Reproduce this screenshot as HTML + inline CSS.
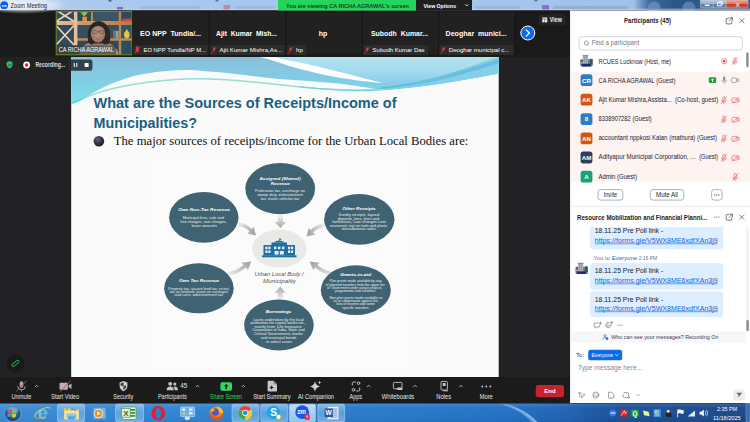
<!DOCTYPE html>
<html lang="en">
<head>
<meta charset="utf-8">
<title>Zoom Meeting</title>
<style>
html,body{margin:0;padding:0;width:750px;height:422px;overflow:hidden;background:#1a1a1a;}
svg{display:block;position:absolute;left:0;top:0;}
text{font-family:"Liberation Sans",sans-serif;}
.serif{font-family:"Liberation Serif",serif;}
</style>
</head>
<body>
<svg width="750" height="422" viewBox="0 0 750 422">
<defs>
<linearGradient id="tb" x1="0" y1="0" x2="1" y2="0"><stop offset="0" stop-color="#b4cfee"/><stop offset="0.150" stop-color="#a8c8ee"/><stop offset="0.700" stop-color="#a4c4ec"/><stop offset="0.845" stop-color="#a2c0e8"/><stop offset="0.865" stop-color="#3f6a9e"/><stop offset="0.900" stop-color="#2a5688"/><stop offset="0.930" stop-color="#2c588a"/><stop offset="1" stop-color="#3a5f8e"/></linearGradient>
<linearGradient id="task" x1="0" y1="0" x2="1" y2="0"><stop offset="0" stop-color="#3c8cd6"/><stop offset="0.300" stop-color="#3082d2"/><stop offset="0.550" stop-color="#2878ca"/><stop offset="0.680" stop-color="#2270c4"/><stop offset="0.750" stop-color="#1f64b4"/><stop offset="0.820" stop-color="#1c529a"/><stop offset="1" stop-color="#1b4888"/></linearGradient>
<linearGradient id="hdr" x1="0" y1="0" x2="1" y2="0">
<stop offset="0" stop-color="#7cc3dc"/><stop offset="0.5" stop-color="#86cbe0"/><stop offset="1" stop-color="#b5e2ea"/>
</linearGradient>
</defs>

<!-- ===== main dark area ===== -->
<g id="main-bg">
<rect x="0" y="0" width="750" height="422" fill="#1a1a1a"/>
<rect x="0" y="56.600" width="570" height="321" fill="#222224"/>
</g>

<g id="titlebar">
<rect x="0" y="0" width="750" height="10" fill="url(#tb)"/>
<rect x="0" y="8.600" width="750" height="1.800" fill="#c4d6ec" opacity="0.550"/>
<!-- blurred background shapes in aero glass -->
<defs><radialGradient id="glow" cx="0.500" cy="0.500" r="0.500"><stop offset="0" stop-color="#fff" stop-opacity="0.850"/><stop offset="0.600" stop-color="#fff" stop-opacity="0.500"/><stop offset="1" stop-color="#fff" stop-opacity="0"/></radialGradient>
<filter id="tbblur" x="-5%" y="-50%" width="110%" height="200%"><feGaussianBlur stdDeviation="0.700"/></filter></defs>
<ellipse cx="24" cy="5" rx="44" ry="9" fill="url(#glow)"/>
<g filter="url(#tbblur)">
<rect x="140" y="6.200" width="60" height="2.600" fill="#8fabd2" opacity="0.550"/>
<rect x="235" y="6.200" width="40" height="2.600" fill="#8fabd2" opacity="0.500"/>
<rect x="223.500" y="5" width="6.500" height="4.400" fill="#c87890" opacity="0.800"/>
<circle cx="110" cy="0.500" r="1.600" fill="#3a5a90" opacity="0.800"/><circle cx="217" cy="0" r="1.600" fill="#3a5a90" opacity="0.800"/><circle cx="536" cy="0" r="1.600" fill="#3a5a90" opacity="0.800"/>
<rect x="117" y="7" width="6" height="2.400" fill="#7a4cc8" opacity="0.800"/>
<rect x="475" y="6.200" width="45" height="2.600" fill="#8aa6d0" opacity="0.600"/>
<rect x="542" y="5" width="7" height="4.400" fill="#7468c8" opacity="0.850"/>
<rect x="553" y="6" width="75" height="3" fill="#88a4ce" opacity="0.650"/>
<circle cx="654" cy="8" r="6.500" fill="#7f9cc8" opacity="0.600"/>
<circle cx="689" cy="8" r="6.500" fill="#7f9cc8" opacity="0.550"/>
</g>
<!-- zoom logo -->
<circle cx="4.2" cy="5.2" r="3.9" fill="#0b5cff"/>
<text x="4.2" y="6.6" font-size="3.6" font-weight="700" fill="#fff" text-anchor="middle">zm</text>
<text x="10.5" y="8" font-size="7.2" fill="#1a1a1a" textLength="36.5" lengthAdjust="spacingAndGlyphs">Zoom Meeting</text>
<!-- window controls -->
<defs><linearGradient id="wc" x1="0" y1="0" x2="0" y2="1"><stop offset="0" stop-color="#b4c6de"/><stop offset="0.450" stop-color="#9ab0d0"/><stop offset="0.500" stop-color="#5a78a4"/><stop offset="1" stop-color="#6a88b2"/></linearGradient>
<linearGradient id="wx" x1="0" y1="0" x2="0" y2="1"><stop offset="0" stop-color="#eaa898"/><stop offset="0.450" stop-color="#dc7a66"/><stop offset="0.500" stop-color="#c63a24"/><stop offset="1" stop-color="#d0553c"/></linearGradient></defs>
<path d="M700.400 0 H726.200 V8 H702 Q700.400 8 700.400 6.400 Z" fill="url(#wc)" stroke="#c8d4e6" stroke-width="0.500"/>
<line x1="713.200" y1="0" x2="713.200" y2="8" stroke="#c8d4e6" stroke-width="0.500"/>
<path d="M726.200 0 H748 V6.400 Q748 8 746.400 8 H726.200 Z" fill="url(#wx)" stroke="#d8c0c0" stroke-width="0.500"/>
<rect x="704.600" y="4.300" width="5.200" height="1.800" fill="#fff" stroke="#4a5f80" stroke-width="0.300"/>
<rect x="717.600" y="2.800" width="3.600" height="3" fill="none" stroke="#fff" stroke-width="0.900"/><path d="M719 2.600 v-0.900 h3.600 v3 h-1" fill="none" stroke="#fff" stroke-width="0.700"/>
<text x="737.800" y="6.700" font-size="8" font-weight="700" fill="#fff" text-anchor="middle" stroke="#7a2a20" stroke-width="0.200">x</text>
<!-- sharing banner -->
<rect x="278" y="0" width="138" height="10.500" fill="#25d45a"/>
<text x="286" y="7.600" font-size="6" font-weight="700" fill="#0c4a1c" textLength="123" lengthAdjust="spacingAndGlyphs">You are viewing CA RICHA AGRAWAL's screen</text>
<rect x="416" y="0" width="56" height="10.5" fill="#1f1f1f"/>
<text x="423.500" y="7.600" font-size="6" font-weight="700" fill="#fff" textLength="32.500" lengthAdjust="spacingAndGlyphs">View Options</text>
<path d="M465.200 4.300 l1.6 1.7 l1.6 -1.7" fill="none" stroke="#fff" stroke-width="0.8"/>
</g>

<g id="gallery">
<!-- active speaker video thumbnail -->
<g id="video-thumb">
<defs><linearGradient id="wood" x1="0" y1="0" x2="1" y2="0"><stop offset="0" stop-color="#e6c19a"/><stop offset="0.35" stop-color="#d09a68"/><stop offset="1" stop-color="#b9783f"/></linearGradient>
<radialGradient id="face" cx="0.5" cy="0.45" r="0.6"><stop offset="0" stop-color="#bc9684"/><stop offset="1" stop-color="#94705f"/></radialGradient></defs>
<filter id="vblur" x="-2%" y="-2%" width="104%" height="104%"><feGaussianBlur stdDeviation="0.350"/></filter>
<clipPath id="vclip"><rect x="56.2" y="11.400" width="75.800" height="43.400"/></clipPath>
<g clip-path="url(#vclip)"><g filter="url(#vblur)">
<rect x="56" y="11" width="77" height="45" fill="#30495a"/>
<rect x="77" y="25" width="42" height="14" fill="#34505f"/>
<rect x="93" y="11" width="26" height="10" fill="#3a5663"/>
<rect x="121" y="25" width="11" height="14" fill="#2e5468"/>
<rect x="121" y="40.500" width="11" height="14" fill="#2b4e60"/>
<rect x="56" y="21" width="76.500" height="4" fill="url(#wood)"/>
<rect x="77" y="38.300" width="55.500" height="2.400" fill="#c68a52"/>
<rect x="73.900" y="11" width="3.500" height="34.500" fill="#e2c09e"/>
<rect x="91" y="11" width="1.800" height="10.500" fill="#c4905e"/>
<rect x="118.800" y="11" width="2.400" height="44" fill="#c08448"/>
<path d="M56 10 L74 21.500 M74 10 L56 21.500 M56 25.500 L74 45 M74 25.500 L56 45" stroke="#ecd2b6" stroke-width="1.700" fill="none"/>
<rect x="82.400" y="16.700" width="4.600" height="4.400" fill="#e0913e"/>
<path d="M79.600 11.400 l4.400 5.400 l5.300 -5.400 l-3.200 1.600 l-1.700 -1.800 l-1.700 1.800 z" fill="#7db53a"/>
<path d="M82 11.400 l2.500 4.500 l2.500 -4.500 z" fill="#8fc84a"/>
<rect x="122.300" y="18.700" width="9" height="2.400" fill="#c2485a"/>
<ellipse cx="126.800" cy="34.800" rx="2.800" ry="3.700" fill="#e8c63a"/><rect x="126" y="29.600" width="1.600" height="2.400" fill="#e8c63a"/>
<rect x="113.200" y="30.600" width="2.600" height="7.700" fill="#6f7a7c"/><rect x="116" y="30.900" width="2.600" height="7.400" fill="#98a0a0"/>
<path d="M79 55 q1 -11 12 -12.200 l14 0 q12 1.200 14 12.200 z" fill="#9a9692"/>
<path d="M88 40 C86.400 30 90.400 21.600 98.400 21 C106.800 21.600 111.200 30 110.200 38 C110 43 108.400 44.400 107 44.400 L90.600 44.400 C88.600 43.400 88.200 42 88 40 Z" fill="#2b2522"/>
<ellipse cx="98" cy="33.600" rx="7.200" ry="9.200" fill="url(#face)"/>
<path d="M90.600 31 q1 -8.400 7.500 -8.800 q6.500 0.400 7.500 8.800 q-3 -5 -7.500 -5 q-4.500 0 -7.500 5z" fill="#2b2522"/>
<g fill="none" stroke="#4e3c38" stroke-width="0.550"><rect x="92.400" y="30.600" width="5" height="2.800" rx="1.100"/><rect x="99.300" y="30.600" width="5" height="2.800" rx="1.100"/><path d="M97.400 31.600 h1.900"/></g>
<path d="M96.200 39 q2.200 0.800 4.400 0" stroke="#7a4f48" stroke-width="0.500" fill="none"/>
<path d="M92.500 43.500 l5.800 4.500 l5.800 -4.500 z" fill="#a17c6a"/>
</g><rect x="56" y="45.300" width="60" height="9.700" fill="#3c3a38" opacity="0.620"/>
</g>
<rect x="56.200" y="11.400" width="75.800" height="43.400" fill="none" stroke="#6c8c1c" stroke-width="1"/>
<text x="58.800" y="52.200" font-size="6.300" fill="#fff" textLength="55" lengthAdjust="spacingAndGlyphs">CA RICHA AGRAWAL</text>
</g>

<!-- participant tiles -->
<g id="tiles" font-weight="700" fill="#fff" font-size="7">
<rect x="133" y="11.600" width="76" height="42.600" fill="#212121"/>
<rect x="209.6" y="11.600" width="76" height="42.600" fill="#212121"/>
<rect x="286.2" y="11.600" width="76" height="42.600" fill="#212121"/>
<rect x="362.8" y="11.600" width="75.6" height="42.600" fill="#212121"/>
<rect x="439" y="11.600" width="75.6" height="42.600" fill="#212121"/>
<g stroke="#151515" stroke-width="0.800"><line x1="132.7" y1="11" x2="132.7" y2="56"/><line x1="209.2" y1="11" x2="209.2" y2="56"/><line x1="285.8" y1="11" x2="285.8" y2="56"/><line x1="362.4" y1="11" x2="362.4" y2="56"/><line x1="438.6" y1="11" x2="438.6" y2="56"/><line x1="514.8" y1="11" x2="514.8" y2="56"/></g>
<text x="140" y="35.6" textLength="61" lengthAdjust="spacingAndGlyphs" xml:space="preserve">EO NPP  Tundla/...</text>
<text x="216" y="35.6" textLength="61" lengthAdjust="spacingAndGlyphs" xml:space="preserve">Ajit  Kumar  Mish...</text>
<text x="323" y="35.6" text-anchor="middle">hp</text>
<text x="371" y="35.6" textLength="57" lengthAdjust="spacingAndGlyphs" xml:space="preserve">Subodh  Kumar...</text>
<text x="445.6" y="35.6" textLength="61" lengthAdjust="spacingAndGlyphs" xml:space="preserve">Deoghar  munici...</text>
</g>
<g id="tile-labels" font-size="6.1" fill="#fff">
<rect x="133.4" y="45" width="75" height="10" fill="#2c2c2c"/>
<rect x="210" y="45" width="75" height="10" fill="#2c2c2c"/>
<rect x="286.6" y="45" width="20" height="10" fill="#2c2c2c"/>
<rect x="363" y="45" width="65" height="10" fill="#2c2c2c"/>
<rect x="439.4" y="45" width="74" height="10" fill="#2c2c2c"/>
<g id="micoff" fill="#e0383e">
<path id="mo" d="M0 0 m-0.9 -3 a0.9 0.9 0 0 1 1.8 0 v2.2 a0.9 0.9 0 0 1 -1.8 0 z M-1.9 -0.6 a1.9 1.9 0 0 0 3.8 0 M0 1.3 v1.2" stroke="#e0383e" stroke-width="0.6" transform="translate(137.3,50.3)"/>
</g>
<g stroke="#e0383e" stroke-width="0.8">
<line x1="135" y1="53.3" x2="139.8" y2="47"/><line x1="211.6" y1="53.3" x2="216.4" y2="47"/><line x1="288.2" y1="53.3" x2="293" y2="47"/><line x1="364.8" y1="53.3" x2="369.6" y2="47"/><line x1="441" y1="53.3" x2="445.8" y2="47"/>
</g>
<g fill="#e0383e">
<rect x="136.4" y="47.2" width="1.9" height="3.8" rx="0.95"/><rect x="213" y="47.2" width="1.9" height="3.8" rx="0.95"/><rect x="289.6" y="47.2" width="1.9" height="3.8" rx="0.95"/><rect x="366.2" y="47.2" width="1.9" height="3.8" rx="0.95"/><rect x="442.4" y="47.2" width="1.9" height="3.8" rx="0.95"/>
</g>
<text x="143.5" y="52.4" textLength="62.5" lengthAdjust="spacingAndGlyphs">EO NPP Tundla/NP M...</text>
<text x="219.6" y="52.4" textLength="62.5" lengthAdjust="spacingAndGlyphs">Ajit Kumar Mishra,As...</text>
<text x="296" y="52.4">hp</text>
<text x="372.6" y="52.4" textLength="52" lengthAdjust="spacingAndGlyphs">Subodh Kumar Das</text>
<text x="448.8" y="52.4" textLength="60.5" lengthAdjust="spacingAndGlyphs">Deoghar municipal c...</text>
</g>
<!-- next arrow -->
<circle cx="527.8" cy="33" r="7" fill="#0e6be8" stroke="#fff" stroke-width="1"/>
<path d="M526.2 29.8 l3.2 3.2 l-3.2 3.2" fill="none" stroke="#fff" stroke-width="1.2" stroke-linecap="round" stroke-linejoin="round"/>
<!-- view button -->
<rect x="538.400" y="14.600" width="27.300" height="10.600" rx="2" fill="#242424"/>
<g fill="#f0f0f0"><rect x="542.300" y="17.500" width="5" height="1.300"/><rect x="542.300" y="19.300" width="2.300" height="3"/><rect x="545" y="19.300" width="2.300" height="3"/></g>
<text x="549.800" y="22.300" font-size="6.300" font-weight="700" fill="#f0f0f0" textLength="12" lengthAdjust="spacingAndGlyphs">View</text>

</g>

<g id="slide">
<defs>
<clipPath id="sclip"><rect x="71.200" y="57" width="427.500" height="320"/></clipPath>
<linearGradient id="hA" gradientUnits="userSpaceOnUse" x1="0" y1="57" x2="0" y2="100"><stop offset="0" stop-color="#8bbfdc"/><stop offset="0.500" stop-color="#82cce4"/><stop offset="1" stop-color="#7edbe9"/></linearGradient>
<linearGradient id="hB" gradientUnits="userSpaceOnUse" x1="0" y1="57" x2="0" y2="90"><stop offset="0" stop-color="#b4e3ee"/><stop offset="0.450" stop-color="#a2daee"/><stop offset="1" stop-color="#7fc2ee"/></linearGradient>
<linearGradient id="arrD" x1="0" y1="0" x2="0" y2="1"><stop offset="0" stop-color="#f2f2f2"/><stop offset="1" stop-color="#a6a6a6"/></linearGradient>
<linearGradient id="arrU" x1="0" y1="1" x2="0" y2="0"><stop offset="0" stop-color="#f2f2f2"/><stop offset="1" stop-color="#a6a6a6"/></linearGradient>
<linearGradient id="arrR" x1="0" y1="0" x2="1" y2="0.300"><stop offset="0" stop-color="#f2f2f2"/><stop offset="1" stop-color="#a6a6a6"/></linearGradient>
<linearGradient id="arrL" x1="1" y1="0" x2="0" y2="0.300"><stop offset="0" stop-color="#f2f2f2"/><stop offset="1" stop-color="#a6a6a6"/></linearGradient>
<linearGradient id="arrRU" x1="0" y1="1" x2="1" y2="0.300"><stop offset="0" stop-color="#f2f2f2"/><stop offset="1" stop-color="#a6a6a6"/></linearGradient>
<linearGradient id="arrLU" x1="1" y1="1" x2="0" y2="0.300"><stop offset="0" stop-color="#f2f2f2"/><stop offset="1" stop-color="#a6a6a6"/></linearGradient>
<radialGradient id="bul" cx="0.4" cy="0.35" r="0.7"><stop offset="0" stop-color="#6a6478"/><stop offset="0.5" stop-color="#3a3546"/><stop offset="1" stop-color="#1d1a26"/></radialGradient>
</defs>
<rect x="71.200" y="57" width="427.500" height="320" fill="#fafafa"/>
<g clip-path="url(#sclip)">
<!-- header waves -->
<path d="M71 57 H499 V73.400 C492 74.600 488 75.400 486 75.800 C475 78 465 79.600 454 81.400 C443 83.200 433 85 422 86.200 C410 87.600 398 89 390 89.400 C378 89.400 366 87.400 354 85.400 C343 83.800 333 83 322 82.200 C311 81.200 300 80.400 290 79.800 C280 79.200 260 77 244 75 C232 73.500 222 72.500 212 71.800 C204 71.200 197 70.200 190 70 C182 69.800 174 70.200 166 71 C155 72 145 73.500 134 76 C123 78.800 112 83.500 102 88 C94 92 86 97 80 101 C77 102.500 74 103.500 71 104 Z" fill="url(#hA)"/>
<path d="M274 57 H499 V73.400 C488 75.400 475 78 454 81.400 C433 85 410 87.600 390 89 L383 83 C370 80 355 75.500 340 72 C322 67.500 305 63.500 290 60.600 C284 59.300 279 58 274 57 Z" fill="url(#hB)"/>
<path d="M499 73.400 C488 75.400 475 78 454 81.400 C433 85 410 87.600 390 89.400 L376 88.400 C400 86.500 430 82 454 75.500 C472 70.500 488 66 499 62 Z" fill="#84cfe8"/>
<path d="M380 87.200 C410 85 432 80 454 73 C472 67.500 488 62.500 499 58.500 V63 C488 67 472 71.500 454 76.500 C430 83 405 86.800 384 88.600 Z" fill="#6fb8ea"/>
<path d="M260 57 C270 59.500 280 63 290 66.200 C306 71 322 74.500 338 77.400 C354 80 370 82 383 83 C370 80 355 75.500 340 72 C322 67.500 305 63.500 290 60.600 C284 59.300 279 58 274 57 Z" fill="#fdfefe"/>
<g fill="none" stroke="#38c0aa" stroke-width="0.500">
<path d="M71 104 C82 99 92 95 102 91.800 C113 88.500 123 86.500 134 84.600 C145 82.800 155 81.500 166 80.600 C175 79.800 185 79 197 79 C213 79 228 80 244 81.400 C255 82.500 265 83.500 276 84.600 C292 86.300 310 88.500 338 89.400 C355 90.300 372 90 390 87 C412 83.500 435 78.500 454 72.600 C466 69 476 65 486 61.400 L499 57.300"/>
<path d="M71 103 C82 98.200 92 94.200 102 91 C113 87.800 123 85.800 134 83.900 C145 82 155 80.800 166 80 C175 79.200 185 78.400 197 78.400 C213 78.400 228 79.400 244 80.800 C255 81.800 265 82.800 276 84 C292 85.700 310 88 338 90.200 C355 91 372 90.600 390 88 C412 84.600 435 80 454 74 C466 70.200 476 66.400 486 62.600 L499 58.500" stroke="#5fd0c4"/>
<path d="M300 86.800 C320 88.800 345 90.800 370 90.600 C380 90.400 392 89.200 404 87" stroke="#6fd6e4" stroke-width="1.200"/>
</g>
</g>
<!-- title -->
<text x="93.500" y="108.200" font-size="13.900" font-weight="700" fill="#1a6081" textLength="303" lengthAdjust="spacingAndGlyphs">What are the Sources of Receipts/Income of</text>
<text x="93.500" y="127.900" font-size="13.900" font-weight="700" fill="#1a6081" textLength="103.500" lengthAdjust="spacingAndGlyphs">Municipalities?</text>
<circle cx="98.900" cy="141.200" r="5.300" fill="url(#bul)"/>
<text class="serif" x="113.800" y="145" font-size="12.200" fill="#111" textLength="354.500" lengthAdjust="spacingAndGlyphs">The major sources of receipts/income for the Urban Local Bodies are:</text>

<!-- diagram -->
<g id="diagram">
<rect x="152" y="156" width="256" height="216" fill="#fbfbfb"/>
<!-- arrows -->
<g>
<path fill="url(#arrD)" d="M277.700 215.300 h5.400 v6.600 h3 l-5.700 6 l-5.700 -6 h3 z"/>
<path fill="url(#arrU)" d="M277.600 299.500 h5.200 v-6.800 h3 l-5.600 -6 l-5.600 6 h3 z"/>
<path fill="url(#arrR)" d="M238 222 q9 1.500 13.500 7 l2.200 -2 l2.300 8.400 l-8.800 -2 l2.200 -2 q-4 -4.500 -11.500 -5 z"/>
<path fill="url(#arrL)" d="M324.500 223 q-9 1.500 -13.500 7 l-2.200 -2 l-2.300 8.400 l8.800 -2 l-2.200 -2 q4 -4.500 11.500 -5 z"/>
<path fill="url(#arrRU)" d="M227 272.500 q10 -2 16.500 -7.500 l-2 -2.300 l9.800 -1.200 l-3.400 8.400 l-2 -2.300 q-7.500 6.500 -18 8.400 z"/>
<path fill="url(#arrLU)" d="M334 272.500 q-10 -2 -16.500 -7.500 l2 -2.300 l-9.800 -1.200 l3.400 8.400 l2 -2.300 q7.500 6.500 18 8.400 z"/>
</g>
<!-- ellipses -->
<g fill="#3f6373">
<ellipse cx="280.200" cy="188.600" rx="34.900" ry="25.700"/>
<ellipse cx="203.800" cy="217.400" rx="34.700" ry="25.300"/>
<ellipse cx="359.300" cy="219.400" rx="35.200" ry="25.300"/>
<ellipse cx="198.900" cy="288.300" rx="34.800" ry="25"/>
<ellipse cx="355.800" cy="290.200" rx="35" ry="24.900"/>
<ellipse cx="278.900" cy="325" rx="34.800" ry="25.400"/>
</g>
<ellipse cx="279.300" cy="248.600" rx="27.300" ry="19" fill="#e9e9e5"/>
<!-- building icon -->
<g fill="#1f6fa3">
<rect x="263.500" y="245" width="31.500" height="10.500"/>
<rect x="262" y="255.300" width="34.500" height="2"/>
<rect x="271.500" y="242.500" width="15.500" height="3"/>
<path d="M273.500 242.500 q5.800 -4 11.600 0 z"/>
<rect x="279" y="238.600" width="0.600" height="2.500"/><rect x="279.300" y="238.600" width="2" height="1.200"/>
</g>
<g fill="#e9f1f6">
<rect x="265.300" y="246.600" width="2.200" height="2.600"/><rect x="268.300" y="246.600" width="2.200" height="2.600"/>
<rect x="265.300" y="250.400" width="2.200" height="2.600"/><rect x="268.300" y="250.400" width="2.200" height="2.600"/>
<rect x="288" y="246.600" width="2.200" height="2.600"/><rect x="291" y="246.600" width="2.200" height="2.600"/>
<rect x="288" y="250.400" width="2.200" height="2.600"/><rect x="291" y="250.400" width="2.200" height="2.600"/>
<rect x="274" y="246.600" width="2.400" height="2.600"/><rect x="278" y="246.600" width="2.400" height="2.600"/><rect x="282" y="246.600" width="2.400" height="2.600"/>
<rect x="274.500" y="251" width="4" height="3.600"/><rect x="279.800" y="251" width="4" height="3.600"/>
</g>
<g font-style="italic" fill="#555" font-size="5.400" text-anchor="middle">
<text x="279" y="276.300" textLength="49" lengthAdjust="spacingAndGlyphs">Urban Local Body /</text>
<text x="279.500" y="282.800" textLength="33" lengthAdjust="spacingAndGlyphs">Municipality</text>
</g>
<!-- circle titles -->
<g font-style="italic" font-weight="700" fill="#fff" font-size="4.300" text-anchor="middle">
<text x="280" y="179.600" textLength="41" lengthAdjust="spacingAndGlyphs">Assigned (Shared)</text>
<text x="280.300" y="184.600" textLength="19" lengthAdjust="spacingAndGlyphs">Revenue</text>
<text x="204.100" y="211.300" textLength="51.800" lengthAdjust="spacingAndGlyphs">Own Non-Tax Revenue</text>
<text x="359" y="209.900" textLength="33.500" lengthAdjust="spacingAndGlyphs">Other Receipts</text>
<text x="199.100" y="282" textLength="40.300" lengthAdjust="spacingAndGlyphs">Own Tax Revenue</text>
<text x="355.600" y="276.200" textLength="30.800" lengthAdjust="spacingAndGlyphs">Grants-in-aid</text>
<text x="278.500" y="312.900" textLength="25.700" lengthAdjust="spacingAndGlyphs">Borrowings</text>
</g>
<!-- circle body text -->
<g fill="#e8eef0" font-size="3.300" text-anchor="middle">
<text x="280" y="192" textLength="50" lengthAdjust="spacingAndGlyphs">Profession tax, surcharge on</text>
<text x="280" y="195.700" textLength="45.500" lengthAdjust="spacingAndGlyphs">stamp duty, entertainment</text>
<text x="280" y="199.500" textLength="38.400" lengthAdjust="spacingAndGlyphs">tax, motor vehicles tax</text>
<text x="203.300" y="219.100" textLength="41" lengthAdjust="spacingAndGlyphs">Municipal fees, sale and</text>
<text x="203.400" y="222.800" textLength="46.400" lengthAdjust="spacingAndGlyphs">hire charges, user charges,</text>
<text x="204.200" y="226.500" textLength="25.400" lengthAdjust="spacingAndGlyphs">lease amounts</text>
<text x="358.800" y="215.900" textLength="40.500" lengthAdjust="spacingAndGlyphs">Sundry receipts, lapsed</text>
<text x="358.400" y="219.500" textLength="41.400" lengthAdjust="spacingAndGlyphs">deposits, fees, fines and</text>
<text x="359" y="223.100" textLength="53.500" lengthAdjust="spacingAndGlyphs">forfeitures, Law charges cost</text>
<text x="358.800" y="226.500" textLength="58.200" lengthAdjust="spacingAndGlyphs">recovered, rent on tools and plants,</text>
<text x="358.800" y="230.100" textLength="34.200" lengthAdjust="spacingAndGlyphs">miscellaneous sales</text>
<text x="198.900" y="289.800" textLength="61.300" lengthAdjust="spacingAndGlyphs">Property tax, vacant land tax, octroi,</text>
<text x="198.800" y="293.100" textLength="58.300" lengthAdjust="spacingAndGlyphs">tax on animals, taxes on carriages</text>
<text x="198.800" y="296.400" textLength="48.400" lengthAdjust="spacingAndGlyphs">and carts, advertisement tax</text>
<text x="355.600" y="282.100" textLength="52.400" lengthAdjust="spacingAndGlyphs">Plan grants made available by way</text>
<text x="355.300" y="285.600" textLength="59.200" lengthAdjust="spacingAndGlyphs">of planned transfers from the upper tier</text>
<text x="354.700" y="288.800" textLength="55.500" lengthAdjust="spacingAndGlyphs" xml:space="preserve">of  Government under various projects,</text>
<text x="355.600" y="292" textLength="41.300" lengthAdjust="spacingAndGlyphs">programmes and schemes.</text>
<text x="355.900" y="298.900" textLength="53" lengthAdjust="spacingAndGlyphs">Non-plan grants made available so</text>
<text x="355.600" y="302.100" textLength="44.400" lengthAdjust="spacingAndGlyphs">as to compensate against the</text>
<text x="355.600" y="305.300" textLength="38.200" lengthAdjust="spacingAndGlyphs">loss of income and some</text>
<text x="355.900" y="308.600" textLength="27.100" lengthAdjust="spacingAndGlyphs">specific transfers.</text>
<text x="278.400" y="320.800" textLength="50.500" lengthAdjust="spacingAndGlyphs">Loans undertaken by the local</text>
<text x="278.200" y="324.300" textLength="56" lengthAdjust="spacingAndGlyphs">authorities for capital works etc.,</text>
<text x="278.200" y="327.800" textLength="47.200" lengthAdjust="spacingAndGlyphs" xml:space="preserve">mainly from  Life Insurance</text>
<text x="278.500" y="331.400" textLength="52.400" lengthAdjust="spacingAndGlyphs">Corporation of India, State and</text>
<text x="278.400" y="335.200" textLength="48.700" lengthAdjust="spacingAndGlyphs">Central Governments, banks</text>
<text x="278.500" y="338.900" textLength="35.500" lengthAdjust="spacingAndGlyphs">and municipal bonds</text>
<text x="279" y="342.500" textLength="26" lengthAdjust="spacingAndGlyphs">in select cases</text>
</g>
</g>
</g>

<g id="toolbar">
<rect x="0" y="377" width="570" height="26.200" fill="#1b1b1b"/>
<!-- annotate pencil -->
<circle cx="15.500" cy="363.300" r="9" fill="#19191c"/>
<rect x="11.300" y="362" width="8.400" height="2.700" rx="1.350" fill="none" stroke="#2fbf5a" stroke-width="0.900" transform="rotate(-38 15.500 363.300)"/>
<g font-size="6.300" fill="#e6e6e6" text-anchor="middle">
<text x="21.500" y="399" textLength="20" lengthAdjust="spacingAndGlyphs">Unmute</text>
<text x="65.200" y="399" textLength="28" lengthAdjust="spacingAndGlyphs">Start Video</text>
<text x="123.300" y="399" textLength="20" lengthAdjust="spacingAndGlyphs">Security</text>
<text x="172.300" y="399" textLength="28.800" lengthAdjust="spacingAndGlyphs">Participants</text>
<text x="226" y="399" textLength="32" lengthAdjust="spacingAndGlyphs" fill="#2fd85f">Share Screen</text>
<text x="271.800" y="399" textLength="37.300" lengthAdjust="spacingAndGlyphs">Start Summary</text>
<text x="316" y="399" textLength="36" lengthAdjust="spacingAndGlyphs">AI Companion</text>
<text x="355.800" y="399" textLength="12.500" lengthAdjust="spacingAndGlyphs">Apps</text>
<text x="398" y="399" textLength="32.500" lengthAdjust="spacingAndGlyphs">Whiteboards</text>
<text x="443.700" y="399" textLength="14.700" lengthAdjust="spacingAndGlyphs">Notes</text>
<text x="486.300" y="399" textLength="13" lengthAdjust="spacingAndGlyphs">More</text>
</g>
<text x="180.200" y="387.500" font-size="6.300" fill="#e6e6e6">45</text>
<!-- carets -->
<g fill="none" stroke="#d0d0d0" stroke-width="0.800">
<path d="M35 387 l1.700 -1.700 l1.700 1.700"/><path d="M195.800 387 l1.700 -1.700 l1.700 1.700"/><path d="M241.600 387 l1.700 -1.700 l1.700 1.700"/>
<path d="M367 387 l1.700 -1.700 l1.700 1.700"/><path d="M413.400 387 l1.700 -1.700 l1.700 1.700"/><path d="M459.200 387 l1.700 -1.700 l1.700 1.700"/>
</g>
<!-- unmute mic (muted) -->
<g fill="#a6a6a6">
<rect x="19.700" y="381.200" width="3.600" height="6.500" rx="1.800"/>
<path d="M17.600 386 a3.900 3.900 0 0 0 7.800 0" fill="none" stroke="#a6a6a6" stroke-width="0.900"/>
<rect x="21.100" y="389.800" width="0.900" height="1.600"/>
</g>
<line x1="16.500" y1="391.500" x2="26.500" y2="380.800" stroke="#d8454b" stroke-width="0.900"/>
<!-- start video (off) -->
<g fill="#b4b4b4"><rect x="59.500" y="382.700" width="8.400" height="7" rx="1.200"/><path d="M68.500 385.300 l3 -1.800 v5.400 l-3 -1.800 z"/></g>
<line x1="60" y1="391.800" x2="70.500" y2="380.800" stroke="#d8454b" stroke-width="0.900"/>
<!-- security shield -->
<path d="M119.600 382.400 l3.900 -1.500 l3.900 1.500 v3.600 q0 3.500 -3.900 5.300 q-3.900 -1.800 -3.900 -5.300 z" fill="#cdcdcd"/>
<path d="M123.500 382 v8.300 q2.800 -1.500 2.800 -4.500 h-5.600 v-2.400 l2.800 -1.100" fill="#1a1a1a" opacity="0.850"/>
<!-- participants -->
<g fill="#c8c8c8"><circle cx="170.200" cy="383.800" r="1.900"/><path d="M166.600 390.200 q0 -3.800 3.600 -3.800 q3.600 0 3.600 3.800 z"/><circle cx="174.800" cy="384" r="1.600"/><path d="M174.600 386.500 q3.300 -0.200 3.300 3.700 h-3.200 q0 -2.300 -1.300 -3.300 z"/></g>
<!-- share screen -->
<rect x="220.400" y="382.200" width="11.600" height="8.600" rx="1.800" fill="#2fd85f"/>
<path d="M226.200 384 l2.200 2.300 h-1.500 v2.600 h-1.400 v-2.600 h-1.500 z" fill="#1a1a1a"/>
<!-- start summary doc -->
<path d="M268.600 380.800 h5 l3.400 3.400 v6.400 q0 1 -1 1 h-7.400 q-1 0 -1 -1 v-8.800 q0 -1 1 -1 z" fill="#c6c6c6"/>
<path d="M273.400 380.800 v2.600 q0 0.800 0.800 0.800 h2.800 z" fill="#8a8a8a"/>
<path d="M271.600 385.200 l0.700 1.600 l1.600 0.700 l-1.600 0.700 l-0.700 1.600 l-0.700 -1.600 l-1.600 -0.700 l1.600 -0.700 z" fill="#1b1b1b"/>
<!-- AI companion sparkle -->
<path d="M315 381 q0.600 4.400 5 5.400 q-4.400 1 -5 5.400 q-0.600 -4.400 -5 -5.400 q4.400 -1 5 -5.400 z" fill="#cdcdcd"/>
<path d="M319.600 380.800 q0.200 1.500 1.700 1.800 q-1.500 0.300 -1.700 1.800 q-0.200 -1.500 -1.700 -1.800 q1.500 -0.300 1.700 -1.800 z" fill="#cdcdcd"/>
<!-- apps -->
<g fill="none" stroke="#c6c6c6" stroke-width="1" stroke-linecap="round"><path d="M352.300 385 v-1.600 q0 -1.400 1.400 -1.400 h1.600 M359.700 388 v1.600 q0 1.400 -1.400 1.400 h-1.600"/><circle cx="358.500" cy="383.200" r="1.300"/><circle cx="353.500" cy="389.800" r="1.300"/></g>
<!-- whiteboards -->
<rect x="393.400" y="382.400" width="8.600" height="6.400" rx="1" fill="none" stroke="#c6c6c6" stroke-width="0.900"/><rect x="397.200" y="387.400" width="5.200" height="2.600" rx="0.500" fill="#c6c6c6"/>
<!-- notes -->
<rect x="441" y="381.400" width="6.400" height="8.600" rx="1" fill="none" stroke="#c6c6c6" stroke-width="0.900"/><rect x="442.800" y="383" width="2.800" height="3" fill="#c6c6c6"/><rect x="443" y="390.300" width="5" height="1" fill="#c6c6c6"/>
<!-- more -->
<g fill="#cdcdcd"><circle cx="482.300" cy="386.500" r="0.900"/><circle cx="486.300" cy="386.500" r="0.900"/><circle cx="490.300" cy="386.500" r="0.900"/></g>
<!-- end -->
<rect x="535.700" y="385" width="28.300" height="12.200" rx="2.600" fill="#c8232a"/>
<text x="549.900" y="393.300" font-size="6" font-weight="700" fill="#fff" text-anchor="middle">End</text>
</g>
<!-- recording strip -->
<g id="recording">
<path d="M6.6 62.2 l3 -1.2 l3 1.2 v2.6 q0 2.6 -3 3.8 q-3 -1.200 -3 -3.8 z" fill="#25c45a"/>
<path d="M8.2 64.8 l1.1 1.100 l1.800 -2.100" fill="none" stroke="#1a1a1a" stroke-width="0.7"/>
<circle cx="26.6" cy="65" r="3.4" fill="#fff"/><circle cx="26.600" cy="65" r="1.700" fill="#e02828"/>
<text x="35.400" y="67.200" font-size="6.300" font-weight="700" fill="#dedede" textLength="29.800" lengthAdjust="spacingAndGlyphs">Recording...</text>
<rect x="68" y="59.400" width="24.400" height="11.400" rx="2.200" fill="#222c32" opacity="0.860"/>
<rect x="73.800" y="63" width="1" height="4" fill="#fff"/><rect x="76.300" y="63" width="1" height="4" fill="#fff"/>
<rect x="84.6" y="63" width="4" height="4" rx="0.600" fill="#fff"/>
</g>

<g id="panel">
<defs><filter id="avblur" x="-10%" y="-10%" width="120%" height="120%"><feGaussianBlur stdDeviation="0.300"/></filter></defs>
<rect x="570" y="10.500" width="180" height="393" fill="#ffffff"/>
<rect x="570" y="10.500" width="1.200" height="393" fill="#f0f0f0"/>
<!-- participants header -->
<text x="647.500" y="23.400" font-size="7.200" font-weight="700" fill="#1c1c1c" text-anchor="middle" textLength="47" lengthAdjust="spacingAndGlyphs">Participants (45)</text>
<g fill="none" stroke="#555" stroke-width="0.800" stroke-linecap="round">
<path d="M728.600 18.300 h-1.600 q-0.800 0 -0.800 0.800 v4 q0 0.800 0.800 0.800 h4 q0.800 0 0.800 -0.800 v-1.600"/><path d="M729.800 17.800 h2.600 v2.600 M732.200 18 l-3 3"/>
<path d="M739.600 18.600 l4.400 4.400 M744 18.600 l-4.400 4.400" stroke="#666"/>
</g>
<!-- search -->
<rect x="579" y="36.700" width="163.400" height="13.300" rx="3" fill="#fff" stroke="#c9cbdc" stroke-width="0.800"/>
<circle cx="586.300" cy="43" r="2" fill="none" stroke="#777" stroke-width="0.700"/><line x1="587.800" y1="44.500" x2="589" y2="45.800" stroke="#777" stroke-width="0.700"/>
<text x="591.700" y="45.300" font-size="6.700" fill="#6e7680" textLength="47.500" lengthAdjust="spacingAndGlyphs">Find a participant</text>
<!-- list bg -->
<rect x="571.600" y="71.700" width="178.400" height="110" fill="#fdf3f0"/>
<!-- scrollbar -->
<rect x="746.200" y="52.400" width="2.400" height="14.800" rx="1.200" fill="#8c8c8c"/>
<!-- avatars -->
<g id="avatars">
<g id="av-photo" filter="url(#avblur)">
<rect x="580.400" y="59.200" width="12.200" height="7.200" rx="1.200" fill="#6a7478"/>
<rect x="580.600" y="60" width="2.400" height="4.600" fill="#4a5a52"/>
<rect x="589.800" y="58.800" width="2.800" height="5.600" fill="#3f5a4a"/>
<rect x="588" y="59.600" width="2" height="3.400" fill="#3a84c4"/>
<rect x="582.800" y="55.300" width="5.300" height="9.200" fill="#b4acb2"/>
<rect x="582.600" y="55.200" width="5.700" height="1" fill="#5a8ab8"/>
<rect x="584.200" y="56.400" width="0.600" height="7.600" fill="#8f8890"/><rect x="586" y="56.400" width="0.600" height="7.600" fill="#8f8890"/>
<rect x="582" y="63.800" width="8.600" height="2.600" fill="#1c2c72"/>
<rect x="580.600" y="62" width="2" height="1.600" fill="#9ac0d8"/>
</g>
<rect x="580.600" y="74.300" width="11.800" height="11.800" rx="2.600" fill="#2d7fc4"/>
<rect x="580.600" y="93.800" width="11.800" height="11.800" rx="2.600" fill="#d4560e"/>
<rect x="580.600" y="113.200" width="11.800" height="11.800" rx="2.600" fill="#2d7fc4"/>
<rect x="580.600" y="132.500" width="11.800" height="11.800" rx="2.600" fill="#d4560e"/>
<rect x="580.600" y="151.600" width="11.800" height="11.800" rx="2.600" fill="#2b3f5c"/>
<rect x="580.600" y="170.800" width="11.800" height="11.800" rx="2.600" fill="#17a37a"/>
<g font-size="6.200" font-weight="700" fill="#fff" text-anchor="middle">
<text x="586.500" y="82.500">CR</text><text x="586.500" y="102">AK</text><text x="586.500" y="121.400">8</text><text x="586.500" y="140.700">AN</text><text x="586.500" y="159.800">AM</text><text x="586.500" y="179">A</text>
</g>
</g>
<!-- names -->
<g font-size="6.600" fill="#232333">
<text x="598.500" y="63.800" textLength="72.500" lengthAdjust="spacingAndGlyphs">RCUES Lucknow (Host, me)</text>
<text x="598.500" y="82.700" textLength="76.800" lengthAdjust="spacingAndGlyphs">CA RICHA AGRAWAL (Guest)</text>
<text x="598.500" y="102.200" textLength="73.300" lengthAdjust="spacingAndGlyphs">Ajit Kumar Mishra,Assista...</text>
<text x="675" y="102.200" textLength="43.300" lengthAdjust="spacingAndGlyphs">(Co-host, guest)</text>
<text x="598.500" y="121.200" textLength="53.300" lengthAdjust="spacingAndGlyphs">8338907282 (Guest)</text>
<text x="598.500" y="140.200" textLength="118.500" lengthAdjust="spacingAndGlyphs">accountant nppkosi Kalan (mathura) (Guest)</text>
<text x="598.500" y="159.300" textLength="97" lengthAdjust="spacingAndGlyphs">Adityapur Municipal Corporation, ...</text>
<text x="699.200" y="159.300" textLength="18.800" lengthAdjust="spacingAndGlyphs">(Guest)</text>
<text x="598.500" y="178.600" textLength="38.500" lengthAdjust="spacingAndGlyphs">Admin (Guest)</text>
</g>
<!-- status icons -->
<g id="status-icons">
<circle cx="724.200" cy="61.300" r="2.600" fill="none" stroke="#d9434a" stroke-width="0.600"/><circle cx="724.200" cy="61.300" r="1.200" fill="#d9434a"/>
<rect x="708.800" y="77.300" width="7.400" height="5.800" rx="1" fill="#1fa53a"/><path d="M712.500 78.500 l1.500 1.600 h-1 v1.600 h-1 v-1.600 h-1 z" fill="#fff"/>
<g fill="#8a8a8a"><rect x="723.100" y="76.600" width="2.200" height="4.400" rx="1.100"/><path d="M721.900 80 a2.300 2.300 0 0 0 4.600 0" fill="none" stroke="#8a8a8a" stroke-width="0.600"/><rect x="723.900" y="82.400" width="0.600" height="1.300"/></g>
<g fill="none" stroke="#8a8a8a" stroke-width="0.700"><rect x="731.400" y="78" width="5.200" height="4.400" rx="0.900"/><path d="M736.800 79.600 l1.800 -1 v3.200 l-1.800 -1"/></g>
</g>
<g id="muted-icons" stroke="#e4525a" fill="none" stroke-width="0.600">
<g id="mm1" transform="translate(734.800,61.300)"><rect x="-1.100" y="-3.600" width="2.200" height="4.400" rx="1.100"/><path d="M-2.300 -0.200 a2.300 2.300 0 0 0 4.600 0 M0 2.200 v1.300 M-2.800 3.600 l5.600 -7.400"/></g>
<g transform="translate(723.800,100.300)"><rect x="-1.100" y="-3.600" width="2.200" height="4.400" rx="1.100"/><path d="M-2.300 -0.200 a2.300 2.300 0 0 0 4.600 0 M0 2.200 v1.300 M-2.800 3.600 l5.600 -7.400"/></g>
<g transform="translate(723.800,119.600)"><rect x="-1.100" y="-3.600" width="2.200" height="4.400" rx="1.100"/><path d="M-2.300 -0.200 a2.300 2.300 0 0 0 4.600 0 M0 2.200 v1.300 M-2.800 3.600 l5.600 -7.400"/></g>
<g transform="translate(723.800,138.800)"><rect x="-1.100" y="-3.600" width="2.200" height="4.400" rx="1.100"/><path d="M-2.300 -0.200 a2.300 2.300 0 0 0 4.600 0 M0 2.200 v1.300 M-2.800 3.600 l5.600 -7.400"/></g>
<g transform="translate(723.800,158)"><rect x="-1.100" y="-3.600" width="2.200" height="4.400" rx="1.100"/><path d="M-2.300 -0.200 a2.300 2.300 0 0 0 4.600 0 M0 2.200 v1.300 M-2.800 3.600 l5.600 -7.400"/></g>
<g transform="translate(735.300,177.200)"><rect x="-1.100" y="-3.600" width="2.200" height="4.400" rx="1.100"/><path d="M-2.300 -0.200 a2.300 2.300 0 0 0 4.600 0 M0 2.200 v1.300 M-2.800 3.600 l5.600 -7.400"/></g>
<g transform="translate(735.300,100.300)"><rect x="-3.400" y="-2.200" width="5.200" height="4.400" rx="0.900"/><path d="M2 -0.600 l1.800 -1 v3.200 l-1.800 -1 M-3.400 3.400 l6.600 -6.600"/></g>
<g transform="translate(735.300,119.600)"><rect x="-3.400" y="-2.200" width="5.200" height="4.400" rx="0.900"/><path d="M2 -0.600 l1.800 -1 v3.200 l-1.800 -1 M-3.400 3.400 l6.600 -6.600"/></g>
<g transform="translate(735.300,138.800)"><rect x="-3.400" y="-2.200" width="5.200" height="4.400" rx="0.900"/><path d="M2 -0.600 l1.800 -1 v3.200 l-1.800 -1 M-3.400 3.400 l6.600 -6.600"/></g>
<g transform="translate(735.300,158)"><rect x="-3.400" y="-2.200" width="5.200" height="4.400" rx="0.900"/><path d="M2 -0.600 l1.800 -1 v3.200 l-1.800 -1 M-3.400 3.400 l6.600 -6.600"/></g>
</g>
<!-- buttons -->
<g fill="#fff" stroke="#8f8f99" stroke-width="0.700">
<rect x="598" y="189.600" width="24.800" height="10.500" rx="2.600"/><rect x="650.300" y="189.600" width="33.500" height="10.500" rx="2.600"/><rect x="711.600" y="189.600" width="10.500" height="10.500" rx="2.600"/>
</g>
<g font-size="6.300" fill="#232333" text-anchor="middle"><text x="610.400" y="197.200" textLength="13.500" lengthAdjust="spacingAndGlyphs">Invite</text><text x="667" y="197.200" textLength="22" lengthAdjust="spacingAndGlyphs">Mute All</text></g>
<g fill="#444"><circle cx="714.800" cy="194.900" r="0.600"/><circle cx="716.800" cy="194.900" r="0.600"/><circle cx="718.800" cy="194.900" r="0.600"/></g>
<!-- divider -->
<rect x="571.200" y="205.600" width="178.800" height="1.600" fill="#f0f0f0"/>
<!-- chat header -->
<text x="577" y="219.500" font-size="6.500" font-weight="700" fill="#1c1c1c" textLength="130.200" lengthAdjust="spacingAndGlyphs">Resource Mobilization and Financial Planni...</text>
<g fill="#555"><circle cx="714.800" cy="217" r="0.600"/><circle cx="716.900" cy="217" r="0.600"/><circle cx="719" cy="217" r="0.600"/></g>
<g fill="none" stroke="#555" stroke-width="0.800" stroke-linecap="round">
<path d="M728.600 214.600 h-1.600 q-0.800 0 -0.800 0.800 v4 q0 0.800 0.800 0.800 h4 q0.800 0 0.800 -0.800 v-1.600"/><path d="M729.800 214.100 h2.600 v2.600 M732.200 214.300 l-3 3"/>
<path d="M739.600 214.900 l4.400 4.400 M744 214.900 l-4.400 4.400" stroke="#666"/>
</g>
<!-- chat messages -->
<clipPath id="chatclip"><rect x="571" y="227.200" width="179" height="106"/></clipPath>
<g clip-path="url(#chatclip)">
<rect x="589.900" y="215" width="133.400" height="34.300" rx="4" fill="#dceeff"/>
<rect x="589.900" y="263.100" width="133.400" height="26.300" rx="4" fill="#dceeff"/>
<rect x="589.900" y="291.300" width="133.400" height="26" rx="4" fill="#dceeff"/>
<g font-size="7.300" fill="#1c1c1c">
<text x="594.800" y="233.400" textLength="68.400" lengthAdjust="spacingAndGlyphs">18.11.25 Pre Poll link -</text>
<text x="594.800" y="273.400" textLength="68.400" lengthAdjust="spacingAndGlyphs">18.11.25 Pre Poll link -</text>
<text x="594.800" y="301.600" textLength="68.400" lengthAdjust="spacingAndGlyphs">18.11.25 Pre Poll link -</text>
</g>
<g font-size="7.300" fill="#1a5fd6">
<text x="594.800" y="242.600" textLength="123" lengthAdjust="spacingAndGlyphs">https://forms.gle/V5WX8ME6xdfXAn3j9</text>
<text x="594.800" y="282.600" textLength="123" lengthAdjust="spacingAndGlyphs">https://forms.gle/V5WX8ME6xdfXAn3j9</text>
<text x="594.800" y="310.500" textLength="123" lengthAdjust="spacingAndGlyphs">https://forms.gle/V5WX8ME6xdfXAn3j9</text>
</g>
<g stroke="#1a5fd6" stroke-width="0.600"><line x1="594.800" y1="243.800" x2="717.800" y2="243.800"/><line x1="594.800" y1="283.800" x2="717.800" y2="283.800"/><line x1="594.800" y1="311.700" x2="717.800" y2="311.700"/></g>
<text x="593.300" y="260" font-size="6" fill="#6e7680"><tspan>You to </tspan><tspan fill="#1a5fd6">Everyone</tspan><tspan font-size="5" dx="1.500">2:16 PM</tspan></text>
<!-- chat avatar -->
<use href="#av-photo" transform="translate(-4.800,207.600)"/>
<!-- reactions -->
<g fill="none" stroke="#6e6e78" stroke-width="0.650" stroke-linecap="round" stroke-linejoin="round">
<path d="M598.200 323 h-3.400 q-0.600 0 -0.600 0.600 v2.800 q0 0.600 0.600 0.600 h0.500 v1.100 l1.300 -1.100 h2.400 q0.600 0 0.600 -0.600 v-1"/><path d="M600.400 322 v2.400 M599.200 323.200 h2.400"/>
<path d="M611 324.600 a2.700 2.700 0 1 1 -2 -2.200"/><path d="M607 325.600 q1.200 1.300 2.500 0 M607.400 324.200 h0.100 M609.100 324.200 h0.100"/><path d="M611.600 321.600 v2.200 M610.500 322.700 h2.200"/>
</g>
<g fill="#6e6e78"><circle cx="618" cy="325.100" r="0.550"/><circle cx="619.900" cy="325.100" r="0.550"/><circle cx="621.800" cy="325.100" r="0.550"/></g>
</g>
<!-- chat scrollbar -->
<rect x="746.200" y="227.200" width="2.600" height="105.500" fill="#f2f2f2"/>
<rect x="746.400" y="320" width="2.400" height="11" rx="1.200" fill="#8c8c8c"/>
<!-- notice -->
<rect x="571.200" y="331.500" width="174.800" height="11" fill="#f5f6fa"/>
<circle cx="605" cy="335.800" r="1.100" fill="none" stroke="#444" stroke-width="0.500"/><path d="M603 339.400 q0 -2 2 -2 q1 0 1.500 0.600" fill="none" stroke="#444" stroke-width="0.500"/><circle cx="607" cy="338.600" r="1.300" fill="#0e6be8"/>
<text x="611.200" y="338.800" font-size="5.800" fill="#3c3c46" textLength="107.200" lengthAdjust="spacingAndGlyphs">Who can see your messages? Recording On</text>
<!-- compose -->
<text x="576" y="356.900" font-size="6.200" fill="#3c3c46">To:</text>
<rect x="588.200" y="349.800" width="34" height="10.500" rx="2.600" fill="#0e6be8"/>
<text x="591.400" y="357.200" font-size="6.200" fill="#fff" textLength="21.800" lengthAdjust="spacingAndGlyphs">Everyone</text>
<path d="M615.400 354.400 l1.400 1.400 l1.400 -1.400" fill="none" stroke="#fff" stroke-width="0.800"/>
<text x="578" y="370.300" font-size="7.500" fill="#8a8a94" textLength="64.300" lengthAdjust="spacingAndGlyphs">Type message here...</text>
<!-- compose icons -->
<g fill="none" stroke="#7a7a7a" stroke-width="0.700" stroke-linecap="round">
<path d="M578.400 393 h3 M579.800 393 v4 M581.400 397.200 l0.400 -1.400 l2.200 -2.200 l1 1 l-2.200 2.200 z"/>
<circle cx="595.800" cy="395" r="3"/><path d="M594.200 395.800 q1.600 1.400 3.200 0 M594.700 394 h0.100 M596.900 394 h0.100"/>
<path d="M609 392.200 h2.800 l2 2 v3.800 h-4.800 z"/>
<path d="M624 392.600 h3.200 q1.400 0 1.400 1.400 v1.600 M627.600 397.600 h-3.200 q-1.400 0 -1.400 -1.400 v-1.600"/><circle cx="628.600" cy="397.400" r="0.900"/>
<path d="M637 394.600 l1.300 1.300 l1.300 -1.300"/>
</g>
<rect x="733.200" y="389.600" width="11.600" height="10.800" rx="2.400" fill="#ededf0"/>
<path d="M736.200 392.800 h6 l-3.800 4.800 v-2.600 z" fill="#6a6a70"/>
</g>

<g id="taskbar">
<defs>
<linearGradient id="tile" x1="0" y1="0" x2="0" y2="1"><stop offset="0" stop-color="#9fd0f2" stop-opacity="0.75"/><stop offset="0.500" stop-color="#7dbbe8" stop-opacity="0.550"/><stop offset="1" stop-color="#8cc6ee" stop-opacity="0.700"/></linearGradient>
<linearGradient id="tileA" x1="0" y1="0" x2="0" y2="1"><stop offset="0" stop-color="#cfe6fa" stop-opacity="0.900"/><stop offset="1" stop-color="#a8d2f4" stop-opacity="0.850"/></linearGradient>
<radialGradient id="orb" cx="0.500" cy="0.350" r="0.700"><stop offset="0" stop-color="#5fa6de"/><stop offset="0.550" stop-color="#235fa6"/><stop offset="1" stop-color="#0e2f60"/></radialGradient>
<linearGradient id="tshade" x1="0" y1="0" x2="0" y2="1"><stop offset="0" stop-color="#fff" stop-opacity="0.140"/><stop offset="0.250" stop-color="#fff" stop-opacity="0.020"/><stop offset="1" stop-color="#000" stop-opacity="0.040"/></linearGradient>
</defs>
<rect x="0" y="403.200" width="750" height="18.800" fill="url(#task)"/>
<rect x="0" y="403.200" width="750" height="18.800" fill="url(#tshade)"/>
<!-- wallpaper swoosh through glass -->
<path d="M503 403.600 C516 406 528 412 537.500 422 H533.500 C524 412.500 514 407 501 403.600 Z" fill="#9ccaf4" opacity="0.800"/><path d="M499 403.600 C514 406.500 526 412 535.500 422 H531 C522 413 512 407.500 497 403.600 Z" fill="#6faae6" opacity="0.500"/>
<rect x="0" y="403" width="750" height="0.800" fill="#17324f" opacity="0.700"/>
<!-- tiles -->
<g stroke="#cfe8fb" stroke-opacity="0.700" stroke-width="0.600">
<rect x="57.500" y="404.200" width="27" height="17.600" rx="1.500" fill="url(#tile)"/>
<rect x="115.600" y="404.200" width="28" height="17.600" rx="1.500" fill="url(#tile)"/>
<rect x="232" y="404.200" width="26.800" height="17.600" rx="1.500" fill="url(#tile)"/>
<rect x="260.800" y="404.200" width="26.800" height="17.600" rx="1.500" fill="url(#tile)"/>
<rect x="289.400" y="404.200" width="26" height="17.600" rx="1.500" fill="url(#tileA)"/>
<rect x="317.800" y="404.200" width="26.800" height="17.600" rx="1.500" fill="url(#tile)"/>
</g>
<!-- start orb -->
<circle cx="12.800" cy="413.300" r="8.200" fill="url(#orb)" stroke="#9ccdf0" stroke-opacity="0.550" stroke-width="0.900"/>
<ellipse cx="12.800" cy="409.600" rx="6" ry="3.400" fill="#cfe8fa" opacity="0.300"/>
<g><path d="M8.600 409.900 q2 -1.200 3.800 -0.300 l-0.600 3.300 q-1.800 -0.800 -3.800 0.300 z" fill="#e8532c"/><path d="M13.200 409.900 q2 0.800 3.800 -0.300 l-0.600 3.300 q-1.800 1 -3.800 0.200 z" fill="#7fc241"/><path d="M7.800 413.800 q2 -1.100 3.800 -0.300 l-0.600 3.300 q-1.800 -0.800 -3.800 0.300 z" fill="#3a9be0"/><path d="M12.400 413.800 q2 0.800 3.800 -0.200 l-0.600 3.300 q-1.800 1 -3.800 0.200 z" fill="#f7c52e"/></g>
<!-- IE -->
<text x="42.800" y="419" font-size="19" font-weight="700" fill="#6cc4f8" stroke="#2470c0" stroke-width="0.250" text-anchor="middle">e</text>
<path d="M35.400 417.600 q-1.800 -3.500 5 -7.600 q7 -4 9.800 -1.600" fill="none" stroke="#f3c530" stroke-width="1.200"/>
<path d="M36.200 418.400 q4 1.200 10 -3" fill="none" stroke="#e0a820" stroke-width="0.900"/>
<!-- explorer folder -->
<path d="M64.200 408 h5 l1 1.200 h8.600 v10 h-14.600 z" fill="#e9c869"/>
<rect x="64.200" y="410.600" width="14.600" height="8.800" fill="#f7e29a"/><rect x="66.500" y="413.600" width="10" height="5" rx="1" fill="#8ec5ee"/><rect x="68" y="416.400" width="7" height="3" fill="#5a9fd8"/>
<rect x="66" y="408.400" width="2" height="1.200" fill="#4fb04a"/><rect x="71" y="408.800" width="2.400" height="1.200" fill="#d84a3a"/><rect x="74" y="409.200" width="2.400" height="1.200" fill="#3f7fd0"/>
<!-- media player -->
<rect x="93" y="407.400" width="13" height="12" rx="1" fill="#5a9ad6"/><rect x="94" y="408.400" width="11" height="10" fill="#7fb7e6"/>
<circle cx="98.400" cy="413.400" r="4.200" fill="#f08a1c" stroke="#fff" stroke-width="0.800"/><path d="M97.200 411.200 l3.400 2.200 l-3.400 2.200 z" fill="#fff"/>
<!-- excel -->
<rect x="122.600" y="407" width="13.400" height="12.600" rx="1" fill="#e9f3e4" stroke="#5a9a4a" stroke-width="0.800"/>
<g fill="#3f8f3a"><rect x="129" y="409" width="6" height="1.800"/><rect x="129" y="412" width="6" height="1.800"/><rect x="129" y="415" width="6" height="1.800"/></g>
<rect x="121.600" y="408.400" width="8.600" height="8.800" fill="#dff0d6" stroke="#4f9a48" stroke-width="0.700"/>
<text x="125.900" y="415.700" font-size="8" font-weight="700" fill="#2a6e2c" text-anchor="middle">X</text>
<!-- opera -->
<ellipse cx="158.200" cy="413.200" rx="6.800" ry="7.200" fill="#e0202c"/><ellipse cx="158.200" cy="413.200" rx="3" ry="5.200" fill="#2e7ec8"/>
<!-- network -->
<rect x="180.600" y="407" width="14" height="9.600" rx="0.800" fill="#6fb0e8" stroke="#d6eafa" stroke-width="0.600"/>
<g fill="#dff0ff"><rect x="182" y="408.400" width="3" height="2.400"/><rect x="189" y="408.400" width="3.600" height="2.400"/><rect x="189" y="412" width="3.600" height="2.400"/><circle cx="184" cy="413.500" r="1.300" fill="#f4d24a"/></g>
<ellipse cx="187.300" cy="418.200" rx="2.800" ry="1.800" fill="#e6e6e6"/>
<!-- firefox -->
<circle cx="216.400" cy="413.200" r="6.800" fill="#f2861e"/><path d="M216.400 406.400 a6.800 6.800 0 0 1 6.800 6.800 l-4 -1 z" fill="#f8c03a"/><circle cx="215.400" cy="412.200" r="3.600" fill="#4a5cc0"/><path d="M209.800 411.500 q2 6 8 5.500 q4 -1 5 -5 q0.500 5 -3 7.500 q-5 2.500 -9 -1.500 q-2 -3 -1 -6.500z" fill="#e8541a"/>
<path d="M211 409 q3 -1 4 1.500 q-2 0 -2.500 1.500 q-1.500 -1 -1.500 -3z" fill="#f6b13a"/>
<!-- chrome -->
<circle cx="245.200" cy="412.800" r="6.900" fill="#e8e8e8"/>
<path d="M245.200 412.800 L239.200 409.400 A6.900 6.900 0 0 1 251.200 409.400 Z" fill="#e2433a"/>
<path d="M245.200 412.800 L251.200 409.400 A6.900 6.900 0 0 1 245.200 419.700 Z" fill="#f7c62a"/>
<path d="M245.200 412.800 L245.200 419.700 A6.900 6.900 0 0 1 239.200 409.400 Z" fill="#3ba755"/>
<circle cx="245.200" cy="412.800" r="3.100" fill="#fff"/><circle cx="245.200" cy="412.800" r="2.400" fill="#3f80e8"/>
<!-- skype -->
<circle cx="273.600" cy="412.400" r="6.600" fill="#1fa5e6"/>
<text x="273.600" y="416" font-size="10" font-weight="700" fill="#fff" text-anchor="middle">S</text>
<circle cx="278.600" cy="417" r="2.400" fill="#fff" stroke="#8fbf3a" stroke-width="0.800"/>
<!-- zoom -->
<circle cx="302.200" cy="412.200" r="6.900" fill="#1559e6"/>
<text x="301.600" y="414" font-size="6.400" font-weight="700" fill="#fff" text-anchor="middle">zm</text>
<rect x="304.600" y="414.200" width="5" height="5.600" rx="0.800" fill="#e8283a"/><rect x="306.600" y="415.400" width="1" height="2.400" fill="#fff"/>
<!-- word -->
<rect x="327.600" y="406.800" width="11" height="12.400" fill="#f4f7fb" stroke="#9fb6d8" stroke-width="0.600"/>
<g fill="#5a7fc0"><rect x="331" y="408.600" width="6.400" height="0.900"/><rect x="331" y="410.600" width="6.400" height="0.900"/><rect x="331" y="412.600" width="6.400" height="0.900"/><rect x="331" y="414.600" width="6.400" height="0.900"/><rect x="331" y="416.600" width="6.400" height="0.900"/></g>
<rect x="324.600" y="408.400" width="8.200" height="8.800" fill="#2a5aa8"/>
<text x="328.700" y="415.300" font-size="6.600" font-weight="700" fill="#fff" text-anchor="middle">W</text>
<!-- tray icons -->
<circle cx="612.800" cy="413" r="3.600" fill="#2f78f0"/><text x="612.800" y="414.200" font-size="3.200" font-weight="700" fill="#fff" text-anchor="middle">zm</text>
<rect x="620.400" y="409.600" width="7" height="7" fill="#d4261e"/><path d="M621.400 415.600 l3 -5 l1 3 l2 -2" stroke="#fff" stroke-width="0.700" fill="none"/>
<rect x="631.400" y="409.400" width="7.400" height="7.400" rx="0.800" fill="#2c9a3a"/><text x="635.100" y="415.600" font-size="6.400" font-weight="700" fill="#fff" text-anchor="middle">Q</text>
<path d="M643 410.400 l5.600 1.400 l1 4.400 l-5.600 -1 z" fill="#e9f59a"/>
<rect x="653.600" y="409.200" width="7.200" height="7.800" fill="#3f9ae8"/><path d="M656 410 v6 M658 410 v6" stroke="#d6ecfb" stroke-width="0.700"/><rect x="654.600" y="411" width="2.200" height="2" fill="#f4d24a"/>
<path d="M665.600 416.800 q0 -5.500 3.400 -6.800 q1.600 2 3 6.800 z" fill="#222"/><circle cx="668.200" cy="411.200" r="1.500" fill="#e8e2d4"/>
<path d="M677.600 409.600 v7.600" stroke="#fff" stroke-width="0.800"/><path d="M678 409.800 q2 -0.800 3 0 q1 0.800 2.600 0 v3.600 q-1.600 0.800 -2.600 0 q-1 -0.800 -3 0 z" fill="#fff"/>
<path d="M687.600 416.400 h7.400 v-6 z" fill="#dfe8f2"/>
<path d="M699.600 411.800 h1.800 l2.400 -2 v6.800 l-2.400 -2 h-1.800 z" fill="#fff"/><path d="M705.200 411 q1.500 2.200 0 4.400 M706.600 410 q2.200 3.200 0 6.400" stroke="#fff" stroke-width="0.600" fill="none"/>
<!-- clock -->
<g font-size="6.100" fill="#fff" text-anchor="middle"><text x="727" y="411.200" textLength="20.200" lengthAdjust="spacingAndGlyphs">2:35 PM</text><text x="726.900" y="419.500" textLength="27.600" lengthAdjust="spacingAndGlyphs">11/18/2025</text></g>
<rect x="746" y="403.600" width="4" height="18.400" fill="#3a6aa8" stroke="#7fa6d6" stroke-width="0.500"/>
</g>

</svg>
</body>
</html>
